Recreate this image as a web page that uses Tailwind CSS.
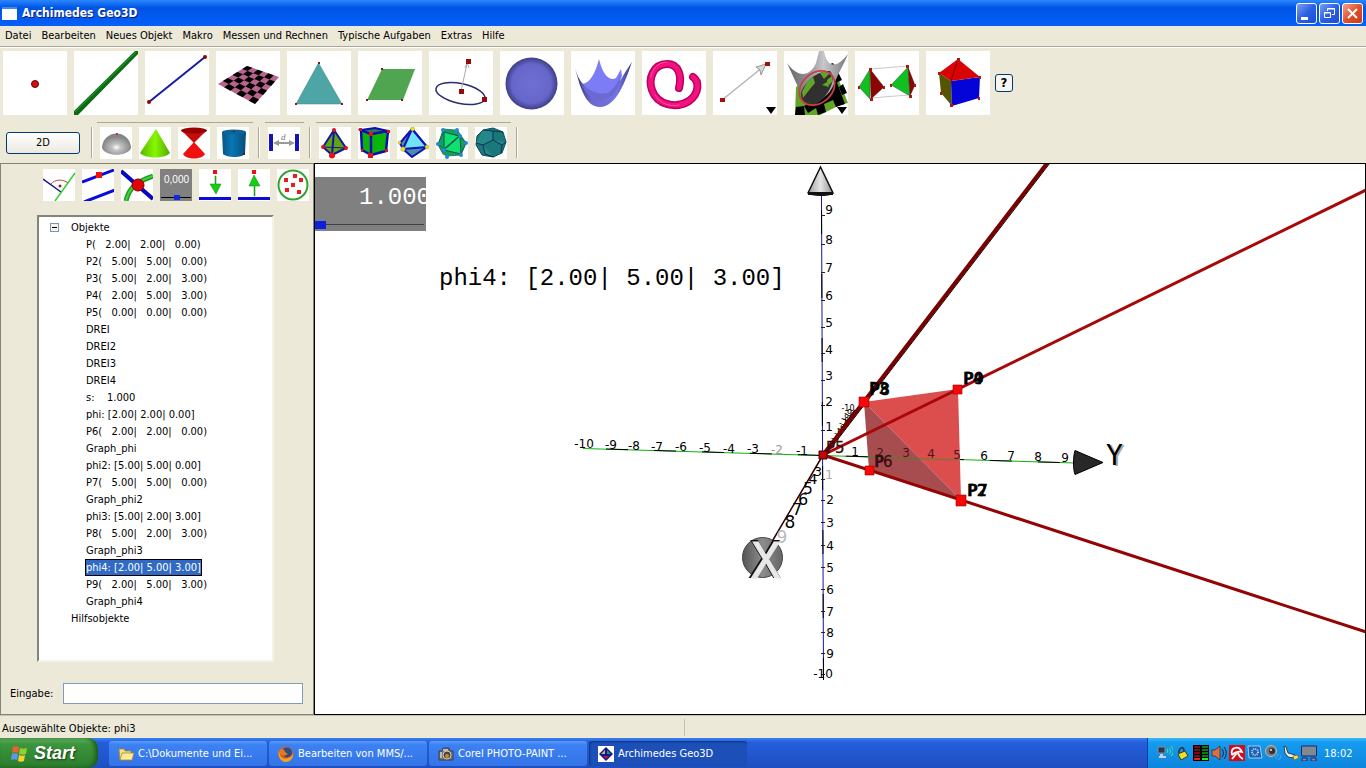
<!DOCTYPE html>
<html lang="de">
<head>
    <meta charset="UTF-8">
    <meta name="viewport" content="width=device-width, initial-scale=1.0">
    <title>Archimedes Geo3D</title>
    <!-- Load Tailwind CSS -->
    <script src="https://cdn.jsdelivr.net/npm/@tailwindcss/browser@4"></script>
</head>
<body class="h-screen flex flex-col overflow-hidden bg-[#ece9d8] text-black text-[11px] leading-[17px] font-['DejaVu_Sans_Condensed','Noto_Sans',sans-serif]">

    <!-- Title Bar -->
    <header class="h-[26px] shrink-0 flex items-center justify-between pl-[2px] pr-[3px] bg-linear-to-b from-[#2a86ff] via-[#0054e3] via-30% to-[#0560fa]">
        <div class="flex items-center gap-[5px]">
            <svg class="w-[15px] h-[13px]" viewBox="0 0 15 13"><path fill="#fff" d="M0 0h15v13H0z"/><path fill="#3c8cf0" d="M0 0h15v2H0z"/></svg>
            <h1 class="text-[12px] font-bold text-white [text-shadow:1px_1px_#0a1883]">Archimedes Geo3D</h1>
        </div>
        <div class="flex gap-[2px]">
            <button aria-label="Minimieren" class="size-[21px] rounded-[3px] border border-white bg-linear-to-br from-[#7c9cf0] via-[#2b5fe4] to-[#1c4cd8]">
                <svg viewBox="0 0 19 19"><path fill="#fff" d="M4 13h7v3H4z"/></svg>
            </button>
            <button aria-label="Wiederherstellen" class="size-[21px] rounded-[3px] border border-white bg-linear-to-br from-[#7c9cf0] via-[#2b5fe4] to-[#1c4cd8]">
                <svg viewBox="0 0 19 19" fill="none" stroke="#fff"><path d="M7.500 7V4.500h7v6H12M7 5h8"/><path d="M4.500 8.500h6v5h-6zM4 9h7"/></svg>
            </button>
            <button aria-label="Schließen" class="size-[21px] rounded-[3px] border border-white bg-linear-to-br from-[#f0a08c] via-[#e0502c] to-[#c83c14]">
                <svg viewBox="0 0 19 19"><path stroke="#fff" stroke-width="2" d="M5 5l9 9M14 5l-9 9"/></svg>
            </button>
        </div>
    </header>

    <!-- Menu Bar -->
    <nav class="h-[21px] shrink-0 flex items-center gap-[10px] pl-[5px] pb-[2px] border-b border-[#aca899]">
        <a href="#">Datei</a>
        <a href="#">Bearbeiten</a>
        <a href="#">Neues Objekt</a>
        <a href="#">Makro</a>
        <a href="#">Messen und Rechnen</a>
        <a href="#">Typische Aufgaben</a>
        <a href="#">Extras</a>
        <a href="#">Hilfe</a>
    </nav>

    <!-- Main Toolbar -->
    <div class="shrink-0 flex items-center gap-[7px] pl-[3px] pt-[3px] border-t border-white">
        <button aria-label="Punkt" class="size-16 bg-white">
            <svg viewBox="0 0 64 64"><circle cx="32" cy="33" r="3.500" fill="#d01010" stroke="#600"/></svg>
        </button>
        <button aria-label="Gerade" class="size-16 bg-white">
            <svg viewBox="0 0 64 64"><path fill="#0b6b12" d="M0 60L61 0h3v3L4 64H0z"/><path stroke="#2f9a38" d="M1 61L62 1"/></svg>
        </button>
        <button aria-label="Strecke" class="size-16 bg-white">
            <svg viewBox="0 0 64 64"><path stroke="#1a1aa8" stroke-width="2" d="M4 51L60 6"/><circle cx="4" cy="51" r="2" fill="#900"/><circle cx="60" cy="6" r="2" fill="#900"/></svg>
        </button>
        <button aria-label="Ebene" class="size-16 bg-white">
            <svg viewBox="0 0 64 64"><path fill="#b8638e" d="M31 15l32 11-24 27L2 33z"/><g id="board"></g></svg>
        </button>
        <button aria-label="Dreieck" class="size-16 bg-white">
            <svg viewBox="0 0 64 64"><path fill="#4ea5a5" stroke="#3c8484" stroke-width=".5" d="M31.500 12L9 53h46z"/><path fill="#8c1414" d="M31 11h2v2h-2zM8 52h2v2H8zM54 52h2v2h-2z"/></svg>
        </button>
        <button aria-label="Parallelogramm" class="size-16 bg-white">
            <svg viewBox="0 0 64 64"><path fill="#50a550" d="M24 18h33L45 49H9z"/><path fill="#7c1c10" d="M23 17h2v2h-2zM8 48h2v2H8zM43 48h2v2h-2z"/></svg>
        </button>
        <button aria-label="Kreis" class="size-16 bg-white">
            <svg viewBox="0 0 64 64"><ellipse cx="31.500" cy="42.500" rx="25" ry="10" fill="none" stroke="#2c2c70" stroke-width="1.500" transform="rotate(12 31.500 42.500)"/><path stroke="#aaa" d="M32 40l6-27M36 17l2-5 2 5" fill="none"/><path fill="#900c0c" d="M37 8h5v5h-5zM30 38h5v5h-5zM53 46h5v5h-5z"/></svg>
        </button>
        <button aria-label="Kugel" class="size-16 bg-white">
            <svg viewBox="0 0 64 64"><defs><radialGradient id="ball"><stop offset="0" stop-color="#6e6ed4"/><stop offset=".75" stop-color="#6666ca"/><stop offset="1" stop-color="#3e3e86"/></radialGradient></defs><circle cx="31.500" cy="32.500" r="26" fill="url(#ball)"/></svg>
        </button>
        <button aria-label="Fläche" class="size-16 bg-white">
            <svg viewBox="0 0 64 64"><defs><linearGradient id="bowl"><stop offset="0" stop-color="#34346c"/><stop offset=".3" stop-color="#6a6ad2"/><stop offset=".75" stop-color="#7474e2"/><stop offset="1" stop-color="#3c3c80"/></linearGradient></defs><path fill="#7c7cf6" d="M8 32C17 36 24 24 28 8c3 13 9 23 17 19l5-9 1 7L40 47 15 45z"/><path fill="url(#bowl)" d="M4 17c6 22 22 29 33 25C47 38 50 26 61 11c-6 17-15 45-32 45C14 56 9 35 4 17z"/><path fill="#6a6ad0" d="M10 32c9 10 20 12 27 10 5-3 11-12 13-18-1 10-4 22-20 25-10 0-16-7-20-17z"/></svg>
        </button>
        <button aria-label="Kurve" class="size-16 bg-white">
            <svg viewBox="0 0 64 64" fill="none" stroke-linecap="round"><path stroke="#b8005c" stroke-width="8" d="M37 37c3-12 0-24-12-24-14 0-19 15-15 26 5 15 24 19 37 11 11-8 10-20 4-24"/><path stroke="#f4107e" stroke-width="5" d="M37 37c3-12 0-24-12-24-14 0-19 15-15 26 5 15 24 19 37 11 11-8 10-20 4-24"/><path stroke="#ff50a8" d="M9 26c1-8 7-15 16-15M13 44c5 9 15 12 24 10"/></svg>
        </button>
        <button aria-label="Vektor" class="size-16 bg-white">
            <svg viewBox="0 0 64 64"><path stroke="#b4b4b4" stroke-width="1.500" d="M9 49L50 16"/><path fill="#d8d8d8" stroke="#777" stroke-width=".7" d="M53 13L43 16l4 3 1 5z"/><path fill="#a01010" d="M7 47h5v4H7zM52 11h5v4h-5z"/><path d="M53 56h10l-5 7z"/></svg>
        </button>
        <button aria-label="Schnitt" class="size-16 bg-white">
            <svg viewBox="0 0 64 64"><defs><linearGradient id="horn"><stop offset="0" stop-color="#666"/><stop offset=".4" stop-color="#99999f"/><stop offset=".6" stop-color="#c8c8cc"/><stop offset="1" stop-color="#77777c"/></linearGradient></defs>
                <path fill="#62a426" d="M12 36l36-24 16 40-8 2-20 10H11z"/>
                <path d="M43 15l6-3 4 6-6 3zM49 24l5-3 4 8-6 3zM43 33l9-4 3 8-9 4zM55 36l4-3 4 9-5 2zM46 41l9-4 3 8-9 4zM37 45l9-4 3 8-9 4zM29 49l8-4 3 8-8 4zM49 49l9-4 3 8-9 3zM20 55l9-5 3 7-8 5zM12 56l8-1 1 9H11zM32 57l8-4 2 8-8 3z"/>
                <path fill="url(#horn)" d="M3 12c9 13 22 16 29 0l3-12h5c2 13 10 21 24 3-5 12-11 22-14 30C45 46 28 58 19 49L14 36z"/>
                <path fill="#303030" d="M17 42c3-11 17-23 29-22 8 9-4 28-14 33-8 4-15 0-15-11z"/>
                <path fill="#62a426" d="M23 31l6-5 2 6-5 6-7 9-1-6zM36 22l6-2 4 2-6 6zM43 29l5-4v6l-5 5zM38 34l5-3 2 5z"/>
                <ellipse cx="33" cy="37" rx="19.500" ry="15" fill="none" stroke="#cc3c44" stroke-width="1.800" transform="rotate(-41 33 37)"/><path d="M53 56h10l-5 7z"/></svg>
        </button>
        <button aria-label="Abbildung" class="size-16 bg-white">
            <svg viewBox="0 0 64 64"><path stroke="#bbb" stroke-width=".8" d="M16 18l37-3M16 47l37-3"/><path fill="#10c020" stroke="#333" stroke-width=".4" d="M15 18L4 36l11 12zM53 16L36 34l19 11z"/><path fill="#8c0404" stroke="#333" stroke-width=".4" d="M15 18l14 18-13 12zM53 16l7 18-5 11z"/><path fill="#b01414" d="M14 17h3v3h-3zM3 35h2v3H3zM15 47h3v3h-3zM28 35h2v3h-2zM51 14h3v3h-3zM35 33h2v3h-2zM54 44h3v3h-3zM59 33h2v3h-2z"/></svg>
        </button>
        <button aria-label="Körper" class="size-16 bg-white">
            <svg viewBox="0 0 64 64"><path fill="#555500" d="M13 22l12 8 1 25-11-13z"/><path fill="#0404d8" d="M25 30l29-4-1 21-27 8z"/><path fill="#d80404" d="M32 8L13 22l12 8 29-4z"/><path stroke="#600" stroke-width=".7" d="M32 8l-7 22"/><path fill="#b01414" d="M31 7h3v3h-3zM12 21h3v3h-3zM53 25h2v3h-2zM24 53h3v3h-3zM52 46h2v3h-2zM14 41h2v3h-2z"/></svg>
        </button>
        <button class="size-[18px] -ml-[2px] rounded-[3px] border border-[#003c74] bg-[#f6f5f0] font-bold text-[13px] leading-[16px]">?</button>
    </div>

    <!-- Second Toolbar -->
    <div class="h-12 shrink-0 flex items-center pl-[6px] pt-[3px]">
        <button class="w-[74px] h-[22px] mt-1 rounded-[3px] border border-[#003c74] bg-linear-to-b from-white to-[#ece9df]">2D</button>
        <div class="w-[2px] h-[31px] mt-1 ml-[11px] mr-[4px] bg-[#aca899] border-r border-white"></div>
        <div class="flex gap-[7px] pl-[3px] pr-1 pt-1 border-t border-[#aca899]">
            <button aria-label="Halbkugel" class="size-8 bg-white">
                <svg viewBox="0 0 32 32"><defs><radialGradient id="dome" cy=".65"><stop offset="0" stop-color="#fff"/><stop offset=".3" stop-color="#c4c4c4"/><stop offset="1" stop-color="#858585"/></radialGradient></defs><path fill="url(#dome)" d="M2 21a14.500 14.500 0 0 1 29 0c-3 9-26 9-29 0z"/><path fill="#c33" d="M16 6h2v2h-2z"/></svg>
            </button>
            <button aria-label="Kegel" class="size-8 bg-white">
                <svg viewBox="0 0 32 32"><defs><linearGradient id="cone"><stop offset="0" stop-color="#5cb400"/><stop offset=".5" stop-color="#84f800"/><stop offset="1" stop-color="#58a800"/></linearGradient></defs><path fill="url(#cone)" d="M17 2l14 24c-5 6-25 6-30 0z"/></svg>
            </button>
            <button aria-label="Doppelkegel" class="size-8 bg-white">
                <svg viewBox="0 0 32 32"><path fill="#c80c0c" d="M3 3l13 13L29 3z"/><ellipse cx="16" cy="3.500" rx="13" ry="3" fill="#900"/><path fill="#f01010" d="M16 15l11 12c-3 6-19 6-22 0z"/></svg>
            </button>
            <button aria-label="Zylinder" class="size-8 bg-white">
                <svg viewBox="0 0 32 32"><defs><linearGradient id="tube"><stop offset="0" stop-color="#085484"/><stop offset=".4" stop-color="#0878b4"/><stop offset="1" stop-color="#064c78"/></linearGradient></defs><path fill="url(#tube)" d="M5 5h24l-1 22c-3 4-18 4-22 0z"/><ellipse cx="17" cy="5" rx="12" ry="2.500" fill="#0a6496"/><path fill="#900" d="M16 4h2v1h-2zM26 26h2v2h-2z"/></svg>
            </button>
        </div>
        <div class="w-[2px] h-[31px] mt-1 mx-[5px] bg-[#aca899] border-r border-white"></div>
        <div class="flex pl-[3px] pr-1 pt-1 border-t border-[#aca899]">
            <button aria-label="Abstand" class="size-8 bg-white">
                <svg viewBox="0 0 32 32"><path fill="#1414b4" d="M1 7h4v17H1zM27 7h4v17h-4z"/><path fill="#999" d="M5 16l6-3v2h10v-2l6 3-6 3v-2H11v2z"/><text x="13" y="13" font-size="9" fill="#777" font-style="italic" font-family="Liberation Serif, serif">d</text></svg>
            </button>
        </div>
        <div class="w-[2px] h-[31px] mt-1 mx-[5px] bg-[#aca899] border-r border-white"></div>
        <div class="flex gap-[7px] pl-[3px] pr-1 pt-1 border-t border-[#aca899]">
            <button aria-label="Tetraeder" class="size-8 bg-white">
                <svg viewBox="0 0 32 32"><path fill="#60a410" stroke="#1414a0" stroke-width="2" stroke-linejoin="round" d="M15 3L4 20l9 8 14-7zM15 3l-2 25"/><path stroke="#1414a0" d="M4 20l23 1"/><g fill="#e01414"><circle cx="15" cy="3" r="2"/><circle cx="4" cy="20" r="2"/><circle cx="13" cy="28.500" r="3"/><circle cx="27" cy="21" r="2"/></g></svg>
            </button>
            <button aria-label="Würfel" class="size-8 bg-white">
                <svg viewBox="0 0 32 32"><path fill="#0ab40a" stroke="#0c0cb0" stroke-width="2.500" stroke-linejoin="round" d="M3 3l10 4v21L4 23zM13 7l17-3-2 20-15 4z"/><path fill="#2a7858" stroke="#0c0cb0" stroke-width="2" d="M3 3l14-2 13 3-17 3z"/><path fill="#e01414" d="M1 1h3v3H1zM11 5h4v4h-4zM29 3h3v3h-3zM10 26h5v5h-5zM27 22h3v3h-3zM3 22h2v3H3z"/></svg>
            </button>
            <button aria-label="Oktaeder" class="size-8 bg-white">
                <svg viewBox="0 0 32 32" stroke-linejoin="round"><path fill="#4890a8" stroke="#1010b0" stroke-width="2" d="M15 2L3 16l3 6 9 8 15-10z"/><path fill="#70e4f4" stroke="#1010c0" stroke-width="2" d="M15 2L6 22l24-2z"/><g fill="#f0e020" stroke="#888020" stroke-width=".4"><circle cx="15.500" cy="2" r="2"/><circle cx="6" cy="22" r="2.300"/><circle cx="30" cy="20" r="2"/><circle cx="2.500" cy="15.500" r="1.500"/></g></svg>
            </button>
            <button aria-label="Ikosaeder" class="size-8 bg-white">
                <svg viewBox="0 0 32 32"><path fill="#10a060" stroke="#186858" stroke-width=".8" d="M7 2l12 1 3 1 8 12-5 12-14 1-4-2-5-9 4-12z"/><path fill="#10e070" stroke="#144c50" stroke-width="1" d="M8 5l15 4L8 22zM24 9L8 23l17 4z"/><path stroke="#186858" d="M8 22l-6-5M23 9l7 7M8 4L2 17M25 27l5-11"/><g fill="#2888d8"><circle cx="7" cy="3" r="2"/><circle cx="21" cy="3" r="2"/><circle cx="24" cy="9" r="2"/><circle cx="2" cy="17" r="2"/><circle cx="8" cy="23" r="2"/><circle cx="30" cy="16" r="2"/><circle cx="25" cy="28" r="2"/><circle cx="11" cy="30" r="2"/></g></svg>
            </button>
            <button aria-label="Dodekaeder" class="size-8 bg-white">
                <svg viewBox="0 0 32 32"><path fill="#1a7878" stroke="#0c4c54" d="M8 3l10-2 10 4 3 10-4 11-9 4-11-2-6-10 1-9z"/><path fill="#258888" stroke="#10305c" d="M8 3l10 1v9L8 18l-7-2M18 13l9 5 4-3M8 18l2 9 9 3M27 18l-1 8M18 4l10 1"/></svg>
            </button>
        </div>
        <div class="w-[2px] h-[31px] mt-1 mx-[5px] bg-[#aca899] border-r border-white"></div>
    </div>

    <main class="flex-1 min-h-0 flex">

        <!-- Sidebar -->
        <aside class="w-[314px] shrink-0 flex flex-col border border-[#85837a] pt-[5px]">
            <div class="flex gap-[7px] pl-[42px]">
                <button aria-label="Lot" class="size-8 bg-white">
                    <svg viewBox="0 0 32 32" fill="none"><path stroke="#14148c" stroke-width="1.500" d="M0 10l18 13"/><path stroke="#30d030" stroke-width="1.500" d="M32 4L12 32"/><path stroke="#b44" d="M8 15c4-5 12-5 17-1"/><circle cx="17" cy="17" r="1.500" fill="#922"/></svg>
                </button>
                <button aria-label="Parallele" class="size-8 bg-white">
                    <svg viewBox="0 0 32 32"><path stroke="#0c0cd8" stroke-width="3" d="M0 13L32 1M2 33l31-12"/><path fill="#f01010" d="M14 3h6v6h-6z"/></svg>
                </button>
                <button aria-label="Schnittpunkt" class="size-8 bg-white">
                    <svg viewBox="0 0 32 32" fill="none"><path stroke="#1c9c1c" stroke-width="5" d="M5 32C8 18 17 12 32 7"/><path stroke="#40d040" stroke-width="2" d="M5 32C8 18 17 12 32 7"/><path stroke="#0808c0" stroke-width="4" d="M0 2l32 28"/><circle cx="17" cy="16" r="6" fill="#e00404" stroke="#800"/></svg>
                </button>
                <button aria-label="Schieberegler" class="size-8 bg-[#808080]">
                    <svg viewBox="0 0 32 32"><text x="4" y="14" font-size="10" fill="#fff" font-family="Liberation Sans, sans-serif">0,000</text><path stroke="#000" d="M1 28.500h30"/><path fill="#1428e0" d="M14 26h6v5h-6z"/></svg>
                </button>
                <button aria-label="Auf Ebene projizieren" class="size-8 bg-white">
                    <svg viewBox="0 0 32 32"><path fill="#0c0cd8" d="M0 28h32v3H0z"/><path fill="#f01010" d="M14 1h4v4h-4z"/><path fill="#10d010" stroke="#187818" stroke-width=".5" d="M16 7h1v8h5l-5 10-6-10h5z"/></svg>
                </button>
                <button aria-label="Von Ebene lösen" class="size-8 bg-white">
                    <svg viewBox="0 0 32 32"><path fill="#0c0cd8" d="M0 28h32v3H0z"/><path fill="#f01010" d="M14 1h4v4h-4z"/><path fill="#10d010" stroke="#187818" stroke-width=".5" d="M16 27h1V17h5L16 6l-5 11h5z"/></svg>
                </button>
                <button aria-label="Punktmenge" class="size-8 bg-white">
                    <svg viewBox="0 0 32 32"><circle cx="16" cy="16" r="14.500" fill="none" stroke="#30a430" stroke-width="2"/><path fill="#e81c1c" d="M16 5h4v4h-4zM7 9h4v4H7zM22 9h4v4h-4zM14 14h4v4h-4zM8 19h4v4H8zM20 21h4v4h-4z"/></svg>
                </button>
            </div>

            <!-- Object Tree -->
            <div class="flex-1 ml-9 mr-[39px] mt-[14px] pt-[2px] bg-white border-2 border-t-[#85837a] border-l-[#85837a] border-r-[#f4f3ea] border-b-[#f4f3ea] overflow-hidden">
                <div class="flex items-center gap-3 pl-[11px]">
                    <button aria-label="Zuklappen" class="size-[9px] border border-[#7898b5] bg-[#f4f3ee] flex items-center justify-center"><span class="w-[5px] h-px bg-black"></span></button>
                    <span>Objekte</span>
                </div>
                <ul class="pl-[47px] [&>li]:whitespace-pre">
                    <li>P(   2.00|   2.00|   0.00)</li>
                    <li>P2(   5.00|   5.00|   0.00)</li>
                    <li>P3(   5.00|   2.00|   3.00)</li>
                    <li>P4(   2.00|   5.00|   3.00)</li>
                    <li>P5(   0.00|   0.00|   0.00)</li>
                    <li>DREI</li>
                    <li>DREI2</li>
                    <li>DREI3</li>
                    <li>DREI4</li>
                    <li>s:    1.000</li>
                    <li>phi: [2.00| 2.00| 0.00]</li>
                    <li>P6(   2.00|   2.00|   0.00)</li>
                    <li>Graph_phi</li>
                    <li>phi2: [5.00| 5.00| 0.00]</li>
                    <li>P7(   5.00|   5.00|   0.00)</li>
                    <li>Graph_phi2</li>
                    <li>phi3: [5.00| 2.00| 3.00]</li>
                    <li>P8(   5.00|   2.00|   3.00)</li>
                    <li>Graph_phi3</li>
                    <li class="w-fit -ml-px px-px bg-[#316ac5] text-white outline outline-black -outline-offset-1">phi4: [2.00| 5.00| 3.00]</li>
                    <li>P9(   2.00|   5.00|   3.00)</li>
                    <li>Graph_phi4</li>
                </ul>
                <p class="pl-8">Hilfsobjekte</p>
            </div>

            <div class="flex items-center gap-[10px] mt-[21px] mb-[10px] pl-[9px] pr-[10px]">
                <label for="eingabe">Eingabe:</label>
                <input id="eingabe" type="text" class="flex-1 min-w-0 h-[21px] px-1 bg-white border border-[#7f9db9]">
            </div>
        </aside>

        <!-- 3D View -->
        <section class="relative flex-1 min-w-0 bg-white border border-black overflow-hidden">
            <svg class="w-full h-full" viewBox="315 164 1050 550" preserveAspectRatio="xMinYMin slice" font-family="DejaVu Sans, sans-serif">
                <defs>
                    <linearGradient id="tipZ"><stop offset="0" stop-color="#a0a0a0"/><stop offset=".5" stop-color="#e4e4e4"/><stop offset="1" stop-color="#909090"/></linearGradient>
                    <linearGradient id="tipX"><stop offset="0" stop-color="#555"/><stop offset=".5" stop-color="#8c8c8c"/><stop offset="1" stop-color="#666"/></linearGradient>
                </defs>

                <!-- axes -->
                <path stroke="#1414a0" d="M821.500 195L823.500 680"/>
                <path stroke="#000" stroke-dasharray="24 40" d="M821.500 210L823.500 680"/>
                <path stroke="#10b010" d="M583 448.500L1076 463"/>
                <path stroke="#000" stroke-dasharray="22 26" d="M606 449L1076 463"/>
                <path stroke="#300" stroke-width="1.500" d="M823 455L770 545M823 455L855 410"/>
                <g id="ticks" stroke="#222"></g>
                <path fill="url(#tipZ)" stroke="#111" stroke-width="1.500" d="M820.500 167L808 193c4 3 20 3 25 0z"/>
                <path stroke="#111" stroke-width="3" d="M808 193.500h25"/>
                <path fill="#282828" stroke="#000" d="M1075 450.500l28 12-28 12c-2-5-2-18 0-24z"/>

                <!-- body -->
                <path fill="#dc4e4e" d="M864 402l94-13 3 111z"/>
                <path fill="#a84d4f" d="M864 402l97 98-92-30z"/>
                <path stroke="#10a010" stroke-opacity=".6" d="M868 457l90 3"/>

                <!-- axis labels -->
                <g id="labels" font-size="12" text-anchor="middle"></g>
                <g font-size="8" text-anchor="middle">
                    <text x="848" y="411">-10</text><text x="848" y="416">-9</text><text x="845" y="421">-8</text><text x="843" y="426">-7</text><text x="841" y="431">-6</text><text x="838" y="436">-5</text><text x="835" y="441">-4</text>
                </g>

                <!-- graph lines -->
                <path stroke="#780000" stroke-width="4" d="M823 455L1048 162"/>
                <path stroke="#200" d="M825 456L1050 163"/>
                <path stroke="#a80808" stroke-width="3" d="M823 455L1366 190"/>
                <path stroke="#940404" stroke-width="3" d="M823 455L1366 632"/>

                <!-- points -->
                <g font-size="16" stroke="#000" stroke-width=".6">
                    <text x="869" y="394">P3</text><text x="870" y="395">P8</text>
                    <text x="963" y="384">P4</text><text x="964" y="384">P9</text>
                    <text x="967" y="496">P2</text><text x="968" y="496">P7</text>
                </g>
                <g font-size="15" fill="#3c0c10" stroke="#3c0c10" stroke-width=".3">
                    <text x="874" y="467">P6</text><text x="875" y="467">P</text><text x="826" y="453">P5</text>
                </g>
                <path fill="#f80808" stroke="#900" stroke-width=".6" d="M859 397h10v10h-10zM953 385h9v9h-9zM865 466h9v9h-9zM956 495h10v11h-10z"/>
                <path fill="#c00808" stroke="#400" d="M819 451h8v8h-8z"/>

                <!-- X and Y caps -->
                <circle cx="762.500" cy="557.500" r="20" fill="url(#tipX)" stroke="#444"/>
                <g font-family="DejaVu Sans Mono, monospace">
                    <text x="750" y="577" font-size="49" stroke="#111" stroke-width="2">X</text>
                    <text x="751" y="578" font-size="49" fill="#e8e8e8" stroke="#e8e8e8">X</text>
                    <text x="1108" y="466" font-size="28" fill="#aaa">Y</text>
                    <text x="1106" y="465" font-size="28">Y</text>
                </g>
                <text x="439" y="285" font-size="24" font-family="Liberation Mono, monospace">phi4: [2.00| 5.00| 3.00]</text>
            </svg>

            <!-- Slider s -->
            <div class="absolute left-0 top-[13px] w-[111px] h-[54px] flex flex-col justify-between bg-[#808080] overflow-hidden">
                <label for="s" class="pl-11 pt-[9px] leading-[24px] text-[24px] text-white font-['Liberation_Mono',monospace]">1.000</label>
                <input id="s" type="range" min="1" max="10" value="1" class="w-[109px] h-[9px] mb-[2px] appearance-none bg-linear-to-b from-transparent from-45% via-black via-45% to-transparent to-55% [&::-webkit-slider-thumb]:appearance-none [&::-webkit-slider-thumb]:w-[11px] [&::-webkit-slider-thumb]:h-[8px] [&::-webkit-slider-thumb]:bg-[#0c20e0]">
            </div>
        </section>
    </main>

    <!-- Status Bar -->
    <div class="h-[23px] shrink-0 flex items-center border-t border-[#c5c2b0]">
        <p class="flex-1 pl-[2px] pt-[2px]">Ausgewählte Objekte: phi3</p>
        <div class="flex-1 h-[17px] border-l border-[#c5c2b0]"></div>
    </div>

    <!-- Taskbar -->
    <footer class="h-[30px] shrink-0 flex text-white bg-linear-to-b from-[#3a80f0] via-[#245edb] via-15% to-[#1e4fc0]">
        <button class="w-[98px] mr-[11px] flex items-center gap-[5px] pl-[10px] rounded-r-[10px] bg-linear-to-b from-[#6cb86c] via-[#3c963c] via-20% to-[#2c7c2c] shadow-[inset_-3px_0_4px_#1c5c1c]">
            <svg class="w-[19px] h-[19px]" viewBox="0 0 19 19"><path fill="#f0602c" d="M3 3c2-1 4-1 6 0L8 9C6 8 4 8 2 9z"/><path fill="#90d030" d="M10 4c2 1 4 1 7 0l-1 6c-3 1-5 1-7 0z"/><path fill="#5c98f0" d="M2 10c2-1 4-1 6 0l-1 6c-2-1-4-1-6 0z"/><path fill="#f8d030" d="M9 11c2 1 4 1 6 0l-1 6c-2 1-4 1-6 0z"/></svg>
            <span class="text-[18px] leading-none font-bold italic font-['Liberation_Sans',sans-serif] [text-shadow:1px_1px_2px_#143c14]">Start</span>
        </button>
        <div class="flex gap-[2px] pt-[3px] pb-[2px]">
            <button class="w-[158px] flex items-center gap-[4px] pl-[9px] rounded-[3px] bg-linear-to-b from-[#5c9cfc] via-[#3c81f3] via-15% to-[#3474e8]">
                <svg class="size-4" viewBox="0 0 16 16"><path fill="#f8e08c" stroke="#b08420" stroke-width=".8" d="M1 3h5l1 2h6v9H2z"/><path fill="#fcec9c" stroke="#b08420" stroke-width=".8" d="M4 7h12l-2 7H2z"/></svg>
                <span>C:\Dokumente und Ei...</span>
            </button>
            <button class="w-[158px] flex items-center gap-[4px] pl-[9px] rounded-[3px] bg-linear-to-b from-[#5c9cfc] via-[#3c81f3] via-15% to-[#3474e8]">
                <svg class="size-4" viewBox="0 0 16 16"><circle cx="8" cy="8" r="7.500" fill="#d85c10"/><circle cx="9" cy="6.500" r="5" fill="#2c4c90"/><path fill="#f8a020" d="M1 3c0 8 4 11 9 9 3-1 5-3 5-5 1 5-3 9-7 9-6 0-9-7-7-13z"/><path fill="#e87818" d="M2 3c3 0 5 1 5 3l3 2-4 2-4-2z"/></svg>
                <span>Bearbeiten von MMS/...</span>
            </button>
            <button class="w-[158px] flex items-center gap-[4px] pl-[9px] rounded-[3px] bg-linear-to-b from-[#5c9cfc] via-[#3c81f3] via-15% to-[#3474e8]">
                <svg class="size-4" viewBox="0 0 16 16"><path fill="#77706a" stroke="#333" stroke-width=".8" d="M1 5h3l1-3h6l1 3h3v9H1z"/><path fill="#bbb" d="M5 3h5v2H5zM2 6h2v6H2z"/><circle cx="9" cy="9" r="4" fill="#444" stroke="#ccc"/><circle cx="9" cy="10" r="2" fill="#d08820"/></svg>
                <span>Corel PHOTO-PAINT ...</span>
            </button>
            <button class="w-[158px] flex items-center gap-[4px] pl-[9px] rounded-[3px] bg-[#1c4fb8] shadow-[inset_1px_1px_2px_#10357e]">
                <svg class="size-4" viewBox="0 0 16 16"><path fill="#fff" d="M0 0h16v16H0z"/><path fill="#14148c" d="M8 1l7 7-7 7-7-7z"/><path fill="#c8b478" d="M7 4v4H3z"/><path fill="#10a070" d="M9 4l4 4H9z"/><path fill="#c01830" d="M5 10h6l-3 3z"/></svg>
                <span>Archimedes Geo3D</span>
            </button>
        </div>
        <div class="ml-auto w-[219px] flex items-center gap-[2px] pl-[9px] border-l border-[#0c3c9c] bg-linear-to-b from-[#38b8f8] via-[#149cf0] via-15% to-[#0e84dc]">
            <svg class="size-4" viewBox="0 0 16 16"><path fill="#283850" stroke="#889" d="M1 2h7v6H1z"/><path fill="#ccd" d="M3 9h3v2H3zM2 11h7v2H2z"/><path fill="none" stroke="#50f070" d="M10 4c1 1 1 3 0 4M12 3c2 2 2 5 0 6M14 1c3 3 3 8 0 10"/></svg>
            <svg class="size-4" viewBox="0 0 16 16"><path fill="none" stroke="#333" stroke-width="1.500" d="M4 8c-1-4 4-8 5-3v3"/><path fill="#f0e020" stroke="#222" stroke-width=".8" d="M3 9l7-3 3 5-7 4z"/></svg>
            <svg class="size-4" viewBox="0 0 16 16"><path d="M0 0h16v16H0z"/><path fill="#780c10" d="M1 1h6v2H1zM1 4h6v2H1zM1 7h6v2H1zM1 10h6v2H1z"/><path fill="#0c7814" d="M9 1h6v2H9zM9 4h6v2H9zM9 7h6v2H9zM9 10h6v2H9z"/><path fill="#f01c1c" d="M1 13h6v2H1z"/><path fill="#1cf01c" d="M9 13h6v2H9z"/></svg>
            <svg class="size-4" viewBox="0 0 16 16"><path fill="#d8704c" stroke="#502418" stroke-width=".8" d="M1 5h3l5-4v14l-5-4H1z"/><path fill="none" stroke="#222" d="M11 4c2 3 2 5 0 8M13 2c3 4 3 8 0 12"/></svg>
            <svg class="size-4" viewBox="0 0 16 16"><path fill="#d40c18" d="M0 0h16v16H0z"/><path fill="none" stroke="#fff" stroke-width="1.800" d="M3 10C1 2 10 0 13 7c-4-1-7 0-10 3M8 8l-5 6M9 8c1 4 3 5 5 6"/></svg>
            <svg class="size-4" viewBox="0 0 16 16"><path fill="#1c60b8" stroke="#a0ccf0" d="M1 1h12l2 12H2z"/><circle cx="8" cy="7" r="3" fill="none" stroke="#bde" stroke-dasharray="1 1" stroke-width="2"/></svg>
            <svg class="size-4" viewBox="0 0 16 16"><circle cx="6" cy="6" r="5.500" fill="#777" stroke="#bbb"/><circle cx="7" cy="6" r="3" fill="#333"/><circle cx="6" cy="5" r="1" fill="#eee"/><path fill="none" stroke="#70a0f0" d="M10 13c2-1 3-2 3-4M13 15c2-1 3-3 3-5"/></svg>
            <svg class="size-4" viewBox="0 0 16 16"><path fill="#eee" stroke="#222" stroke-width=".8" d="M1 1l2 1 2 6 7 2-1 3-6-1-3-4z"/><path fill="#f0e060" stroke="#553" stroke-width=".6" d="M10 11l4-1 2 3-5 2z"/></svg>
            <svg class="size-4" viewBox="0 0 16 16"><path fill="#808890" stroke="#142878" d="M.5 1h15v10H.5z"/><path fill="#889" stroke="#142878" d="M1 13h5v3H1zM10 13h5v3h-5z"/></svg>
            <time class="ml-[5px]">18:02</time>
        </div>
    </footer>

    <script>
        const NS = 'http://www.w3.org/2000/svg';

        function add(parent, tag, attrs, text) {
            const el = document.createElementNS(NS, tag);
            for (const key in attrs) el.setAttribute(key, attrs[key]);
            if (text) el.textContent = text;
            parent.appendChild(el);
        }

        // Checkerboard of the plane icon: corners top, right, bottom, left
        const c = [[31, 15], [63, 26], [39, 53], [2, 33]];
        const at = (u, v) => [0, 1].map(k =>
            (1 - u) * (1 - v) * c[0][k] + u * (1 - v) * c[1][k] + u * v * c[2][k] + (1 - u) * v * c[3][k]);
        const board = document.getElementById('board');
        for (let i = 0; i < 6; i++) {
            for (let j = 0; j < 6; j++) {
                if ((i + j) % 2) continue;
                const pts = [at(i / 6, j / 6), at((i + 1) / 6, j / 6), at((i + 1) / 6, (j + 1) / 6), at(i / 6, (j + 1) / 6)];
                add(board, 'polygon', { points: pts.join(' '), fill: '#000' });
            }
        }

        // Axis labels: text, x, baseline, optional colour and size
        const labels = [
            ['-10', 584, 448], ['-9', 611, 449], ['-8', 634, 450], ['-7', 657, 451], ['-6', 681, 451],
            ['-5', 705, 452], ['-4', 729, 453], ['-3', 753, 453], ['-2', 777, 454, '#999'], ['-1', 802, 455],
            ['1', 855, 456], ['2', 880, 457, '#501418'], ['3', 906, 457, '#501418'], ['4', 931, 458, '#501418'], ['5', 957, 459, '#501418'],
            ['6', 984, 460], ['7', 1011, 460], ['8', 1038, 461], ['9', 1065, 462],
            ['9', 829, 214], ['8', 829, 244], ['7', 829, 272], ['6', 829, 300], ['5', 829, 327],
            ['4', 829, 354], ['3', 829, 380], ['2', 829, 406], ['1', 829, 431],
            ['1', 829, 479, '#aaa'], ['2', 830, 504], ['3', 830, 527], ['4', 830, 550], ['5', 830, 572],
            ['6', 830, 594], ['7', 830, 616], ['8', 830, 637], ['9', 830, 658], ['-10', 823, 678],
            ['3', 818, 476, '#000', 13], ['4', 813, 484, '#000', 14], ['5', 808, 494, '#000', 15],
            ['6', 803, 505, '#000', 16], ['7', 797, 515, '#000', 16], ['8', 790, 528, '#000', 17], ['9', 782, 543, '#bbb', 17]
        ];
        const labelGroup = document.getElementById('labels');
        for (const [text, x, y, fill, size] of labels) {
            add(labelGroup, 'text', { x, y, fill: fill || '#000', 'font-size': size || 12 }, text);
        }

        // Ticks on the vertical axis
        const ticks = document.getElementById('ticks');
        for (const y of [215, 244, 272, 300, 327, 353, 380, 405, 430, 479, 500, 522, 545, 567, 589, 611, 632, 653, 674]) {
            add(ticks, 'path', { d: `M821 ${y}.5h4` });
        }
    </script>
</body>
</html>
